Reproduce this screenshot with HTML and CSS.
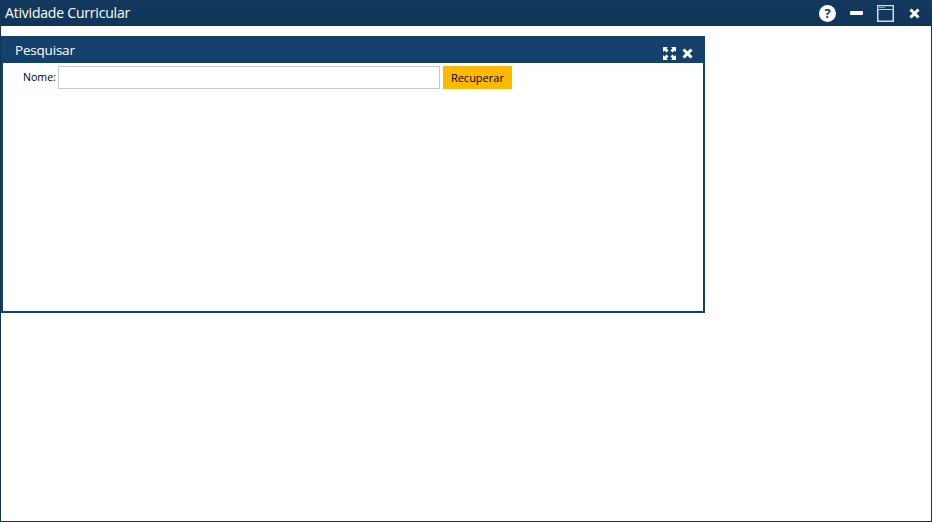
FILE: index.html
```html
<!DOCTYPE html>
<html lang="pt">
<head>
<meta charset="utf-8">
<title>Atividade Curricular</title>
<link rel="stylesheet" href="styles.css">
</head>
<body>
<div class="window">
  <header class="titlebar">
    <span class="title">Atividade Curricular</span>
    <div class="controls">
      <svg class="ico-help" width="17" height="17" viewBox="0 0 17 17"><circle cx="8.500" cy="8.500" r="8.500" fill="#fff"/><text x="8.500" y="13" text-anchor="middle" class="qmark">?</text></svg>
      <svg class="ico-min" width="13" height="4" viewBox="0 0 13 4"><rect width="13" height="4" rx="1" fill="#fff"/></svg>
      <svg class="ico-max" width="17" height="17" viewBox="0 0 17 17"><rect x=".75" y=".75" width="15.500" height="15.500" fill="none" stroke="#d5dde3" stroke-width="1.500"/><rect x="1.500" y="1.500" width="14" height="2.500" fill="#0f3659"/><path d="M2.500 2.500h1M4.500 2.500h1M6.500 2.500h1" stroke="#fff"/><rect x="1.500" y="4" width="14" height="1" fill="#c9d3db"/></svg>
      <svg class="ico-close" width="11" height="11" viewBox="0 0 11 11"><path d="M1.500 1.500l8 8M9.500 1.500l-8 8" stroke="#fff" stroke-width="3"/></svg>
    </div>
  </header>
  <section class="panel">
    <div class="panel-head">
      <span class="panel-title">Pesquisar</span>
      <div class="panel-controls">
        <svg width="13" height="13" viewBox="0 0 13 13"><path d="M0 0h5L3.500 1.500 5.500 3.500 3.500 5.500 1.500 3.500 0 5zM13 0v5L11.500 3.500 9.500 5.500 7.500 3.500 9.500 1.500 8 0zM0 13V8L1.500 9.500 3.500 7.500 5.500 9.500 3.500 11.500 5 13zM13 13H8L9.500 11.500 7.500 9.500 9.500 7.500 11.500 9.500 13 8z" fill="#fff"/></svg>
        <svg width="11" height="11" viewBox="0 0 11 11"><path d="M1.500 1.500l8 8M9.500 1.500l-8 8" stroke="#fff" stroke-width="3"/></svg>
      </div>
    </div>
    <form class="search">
      <label class="field-label" for="nome">Nome:</label>
      <input class="field-input" id="nome" type="text">
      <button class="btn" type="button">Recuperar</button>
    </form>
  </section>
</div>
</body>
</html>
```
FILE: styles.css
```css
* { box-sizing: border-box; }
html, body { margin: 0; padding: 0; height: 100%; background: #fff; }
body { font-family: "Open Sans", "Noto Sans", sans-serif; overflow: hidden; }
.window {
  height: 522px;
  border: 1px solid #0f3659;
  border-top: 0;
  display: flex;
  flex-direction: column;
}
.titlebar {
  height: 26px;
  margin: 0 -1px;
  background: linear-gradient(#133a5e, #0f3659);
  color: #fff;
  display: flex;
  align-items: center;
  justify-content: space-between;
  padding: 0 12px 0 5px;
}
.title { font-size: 14px; letter-spacing: -0.2px; line-height: 26px; }
.controls { display: flex; align-items: center; }
.ico-help { margin-right: 14px; }
.ico-min { margin-right: 14px; }
.ico-max { margin-right: 15px; }
.qmark { font: bold 13px "Open Sans", sans-serif; fill: #0f3659; }
.panel {
  width: 704px;
  height: 277px;
  margin-top: 10px;
  border: 2px solid #14416b;
  border-top: 0;
}
.panel-head {
  height: 27px;
  margin: 0 -2px;
  background: #14416b;
  color: #fff;
  display: flex;
  align-items: center;
  justify-content: space-between;
  padding: 1px 12px 0 14px;
}
.panel-title { font-size: 13.500px; letter-spacing: -0.2px; line-height: 26px; }
.panel-controls { display: flex; align-items: center; gap: 6px; padding-top: 7px; }
.search {
  display: flex;
  align-items: center;
  padding: 3px 0 0 20px;
}
.field-label { font-size: 10.600px; line-height: 20px; color: #000; margin: 0 2px 2px 0; }
.field-input {
  width: 382px;
  height: 23px;
  border: 1px solid #c8c8c8;
  background: #fff;
  margin: 0 3px 0 0;
  padding: 0;
}
.btn {
  width: 69px;
  height: 23px;
  border: 0;
  padding: 0;
  background: #ffb900;
  color: #000;
  font: 11px "Open Sans", sans-serif;
}
```
